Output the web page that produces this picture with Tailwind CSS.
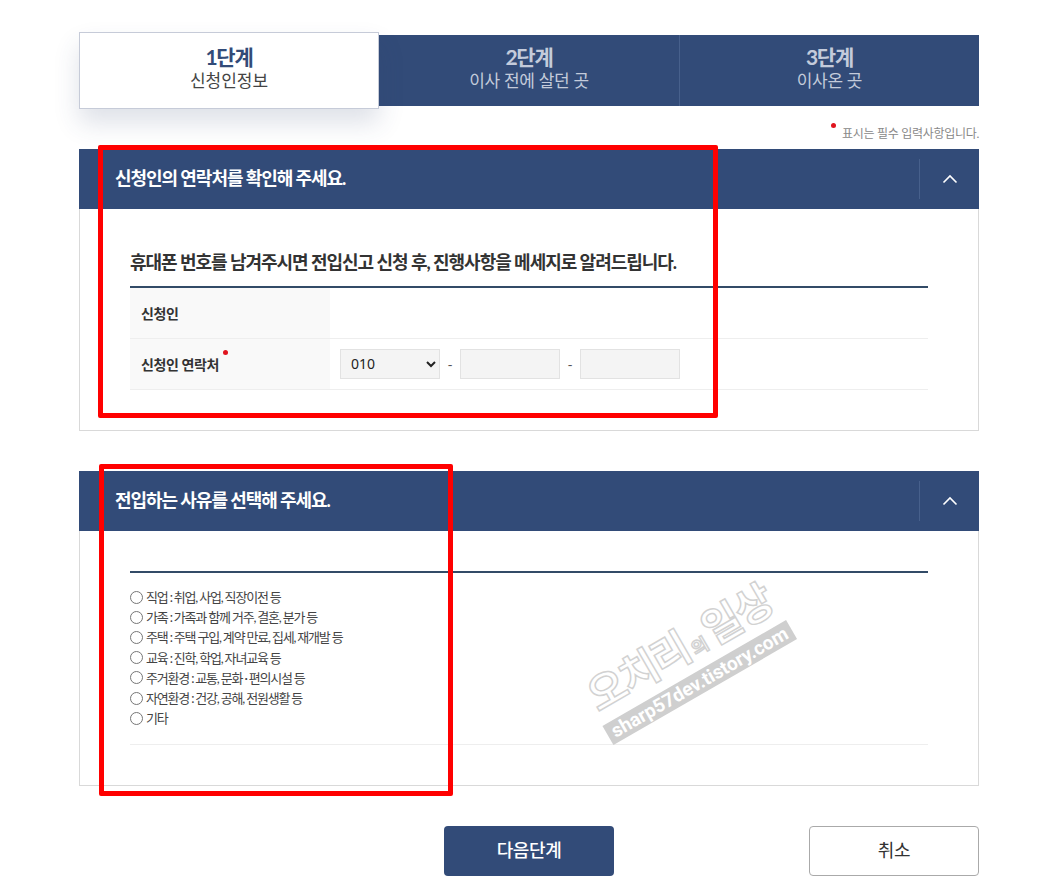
<!DOCTYPE html>
<html lang="ko">

<head>
  <meta charset="UTF-8" />
  <meta name="viewport" content="width=device-width, initial-scale=1.0" />
  <title>전입신고 신청</title>
  <script src="https://cdn.jsdelivr.net/npm/@tailwindcss/browser@4"></script>
</head>

<body class="bg-white text-[#222] font-['Lato','Noto_Sans_CJK_KR',sans-serif]">
  <div class="relative w-[1062px] h-[889px] overflow-hidden pl-[79px] pt-[32px]">
    <div class="w-[900px]">

      <!-- 단계 탭 -->
      <div class="flex items-center h-[77px]">
        <div class="relative z-10 w-[300px] h-[77px] pb-[6px] bg-white border border-[#c6cbd8] shadow-[0_14px_24px_rgba(50,70,110,0.16)] flex flex-col items-center justify-center">
          <strong class="text-[21px] leading-[25px] font-bold text-[#324b78] tracking-[-1.2px]">1단계</strong>
          <span class="text-[17px] leading-[23px] text-[#444] tracking-[0px]">신청인정보</span>
        </div>
        <div class="w-[300px] h-[71px] pb-[6px] bg-[#324b78] flex flex-col items-center justify-center">
          <strong class="text-[21px] leading-[25px] font-bold text-[#c4cbdb] tracking-[-1.2px]">2단계</strong>
          <span class="text-[17px] leading-[23px] text-[#c4cbdb] tracking-[-0.3px]">이사 전에 살던 곳</span>
        </div>
        <div class="w-[300px] h-[71px] pb-[6px] bg-[#324b78] flex flex-col items-center justify-center border-l border-[#47608c]">
          <strong class="text-[21px] leading-[25px] font-bold text-[#c4cbdb] tracking-[-1.2px]">3단계</strong>
          <span class="text-[17px] leading-[23px] text-[#c4cbdb] tracking-[-0.3px]">이사온 곳</span>
        </div>
      </div>

      <!-- 필수 안내 -->
      <div class="h-[40px] flex justify-end items-start pt-[15px]">
        <span class="w-[5px] h-[5px] rounded-full bg-[#e0141e] -mt-[1px] mr-[6px]"></span>
        <span class="text-[12px] leading-[20px] text-[#888] tracking-[-0.3px]">표시는 필수 입력사항입니다.</span>
      </div>

      <!-- 연락처 -->
      <section class="h-[282px] border border-t-0 border-[#d9d9d9]">
        <div class="-mx-px h-[60px] bg-[#324b78] flex items-center pl-[36px]">
          <h2 class="flex-1 pb-[1px] text-[18px] font-bold text-white tracking-[-1.05px]">신청인의 연락처를 확인해 주세요.</h2>
          <div class="w-[60px] h-[40px] border-l border-[#47608c] flex items-center justify-center">
            <svg class="w-[16px] h-[10px]" viewBox="0 0 16 10" fill="none" stroke="#fff" stroke-width="1.6">
              <path d="M1.5 8.5L8 2l6.5 6.5" />
            </svg>
          </div>
        </div>
        <div class="px-[50px]">
          <h3 class="pt-[40px] h-[77px] text-[18px] leading-[26px] font-bold text-[#333] tracking-[-1.02px]">휴대폰 번호를 남겨주시면 전입신고 신청 후, 진행사항을 메세지로 알려드립니다.</h3>
          <div class="border-t-2 border-[#324b67]">
            <div class="flex h-[51px] border-b border-[#eee]">
              <div class="w-[200px] bg-[#f9f9f9] pl-[11px] flex items-center text-[14px] font-bold text-[#333] tracking-[-0.4px]">신청인</div>
            </div>
            <div class="flex h-[51px] border-b border-[#eee]">
              <div class="w-[200px] bg-[#f9f9f9] pl-[11px] flex items-center text-[14px] font-bold text-[#333] tracking-[-0.4px]">
                신청인 연락처<span class="w-[5px] h-[5px] rounded-full bg-[#e0141e] ml-[4px] -mt-[24px]"></span>
              </div>
              <div class="flex items-center pl-[10px] text-[14px] text-[#555]">
                <select class="w-[100px] h-[30px] bg-[#f4f4f4] border border-[#e2e2e2] pl-[6px] pb-[2px] text-[14px] text-[#222] font-['Noto_Sans',sans-serif]">
                  <option>010</option>
                </select>
                <span class="w-[20px] text-center">-</span>
                <input type="text" class="w-[100px] h-[30px] bg-[#f4f4f4] border border-[#e2e2e2]" />
                <span class="w-[20px] text-center">-</span>
                <input type="text" class="w-[100px] h-[30px] bg-[#f4f4f4] border border-[#e2e2e2]" />
              </div>
            </div>
          </div>
        </div>
      </section>

      <!-- 전입 사유 -->
      <section class="mt-[40px] h-[315px] border border-t-0 border-[#d9d9d9]">
        <div class="-mx-px h-[60px] bg-[#324b78] flex items-center pl-[36px]">
          <h2 class="flex-1 pb-[1px] text-[18px] font-bold text-white tracking-[-1.05px]">전입하는 사유를 선택해 주세요.</h2>
          <div class="w-[60px] h-[40px] border-l border-[#47608c] flex items-center justify-center">
            <svg class="w-[16px] h-[10px]" viewBox="0 0 16 10" fill="none" stroke="#fff" stroke-width="1.6">
              <path d="M1.5 8.5L8 2l6.5 6.5" />
            </svg>
          </div>
        </div>
        <div class="mx-[50px] mt-[40px] h-[174px] border-t-2 border-b border-t-[#324b67] border-b-[#eee] pt-[14px] text-[13px] leading-[20px] text-[#444] tracking-[-1.2px]">
          <label class="flex items-center h-[20.2px]"><input type="radio" name="reason" class="w-[13px] h-[13px] mr-[3px]" />직업 : 취업, 사업, 직장이전 등</label>
          <label class="flex items-center h-[20.2px]"><input type="radio" name="reason" class="w-[13px] h-[13px] mr-[3px]" />가족 : 가족과 함께 거주, 결혼, 분가 등</label>
          <label class="flex items-center h-[20.2px]"><input type="radio" name="reason" class="w-[13px] h-[13px] mr-[3px]" />주택 : 주택 구입, 계약 만료, 집세, 재개발 등</label>
          <label class="flex items-center h-[20.2px]"><input type="radio" name="reason" class="w-[13px] h-[13px] mr-[3px]" />교육 : 진학, 학업, 자녀교육 등</label>
          <label class="flex items-center h-[20.2px]"><input type="radio" name="reason" class="w-[13px] h-[13px] mr-[3px]" />주거환경 : 교통, 문화 · 편의시설 등</label>
          <label class="flex items-center h-[20.2px]"><input type="radio" name="reason" class="w-[13px] h-[13px] mr-[3px]" />자연환경 : 건강, 공해, 전원생활 등</label>
          <label class="flex items-center h-[20.2px]"><input type="radio" name="reason" class="w-[13px] h-[13px] mr-[3px]" />기타</label>
        </div>
      </section>

      <!-- 버튼 -->
      <div class="mt-[40px] pl-[365px] flex justify-between">
        <button class="w-[170px] h-[50px] pb-[2px] rounded-[4px] bg-[#324b78] text-white text-[18px] font-medium tracking-[-0.4px]">다음단계</button>
        <button class="w-[170px] h-[50px] pb-[2px] rounded-[4px] bg-white border border-[#aaa] text-[#333] text-[18px] tracking-[-0.4px]">취소</button>
      </div>
    </div>

    <!-- 캡처 위에 그린 빨간 표시 -->
    <div class="absolute left-[98px] top-[145px] w-[620px] h-[273px] border-[5px] border-[#f00] rounded-[2px]"></div>
    <div class="absolute left-[99px] top-[464px] w-[354px] h-[332px] border-[5px] border-[#f00] rounded-[2px]"></div>

    <!-- 워터마크 -->
    <div class="absolute left-[567px] top-[624px] w-[240px] -rotate-[30deg] flex flex-col items-center">
      <span class="whitespace-nowrap text-[42px] leading-[42px] font-bold text-white tracking-[-2px] [-webkit-text-stroke:1.5px_#d2d2d2]">오치리<span class="text-[18px] tracking-[0px] mx-[3px]">의</span>일상</span>
      <span class="whitespace-nowrap bg-[#cfcfcf] text-white text-[19px] leading-[22px] font-bold px-[6px] font-['Roboto',sans-serif]">sharp57dev.tistory.com</span>
    </div>
  </div>
</body>

</html>
